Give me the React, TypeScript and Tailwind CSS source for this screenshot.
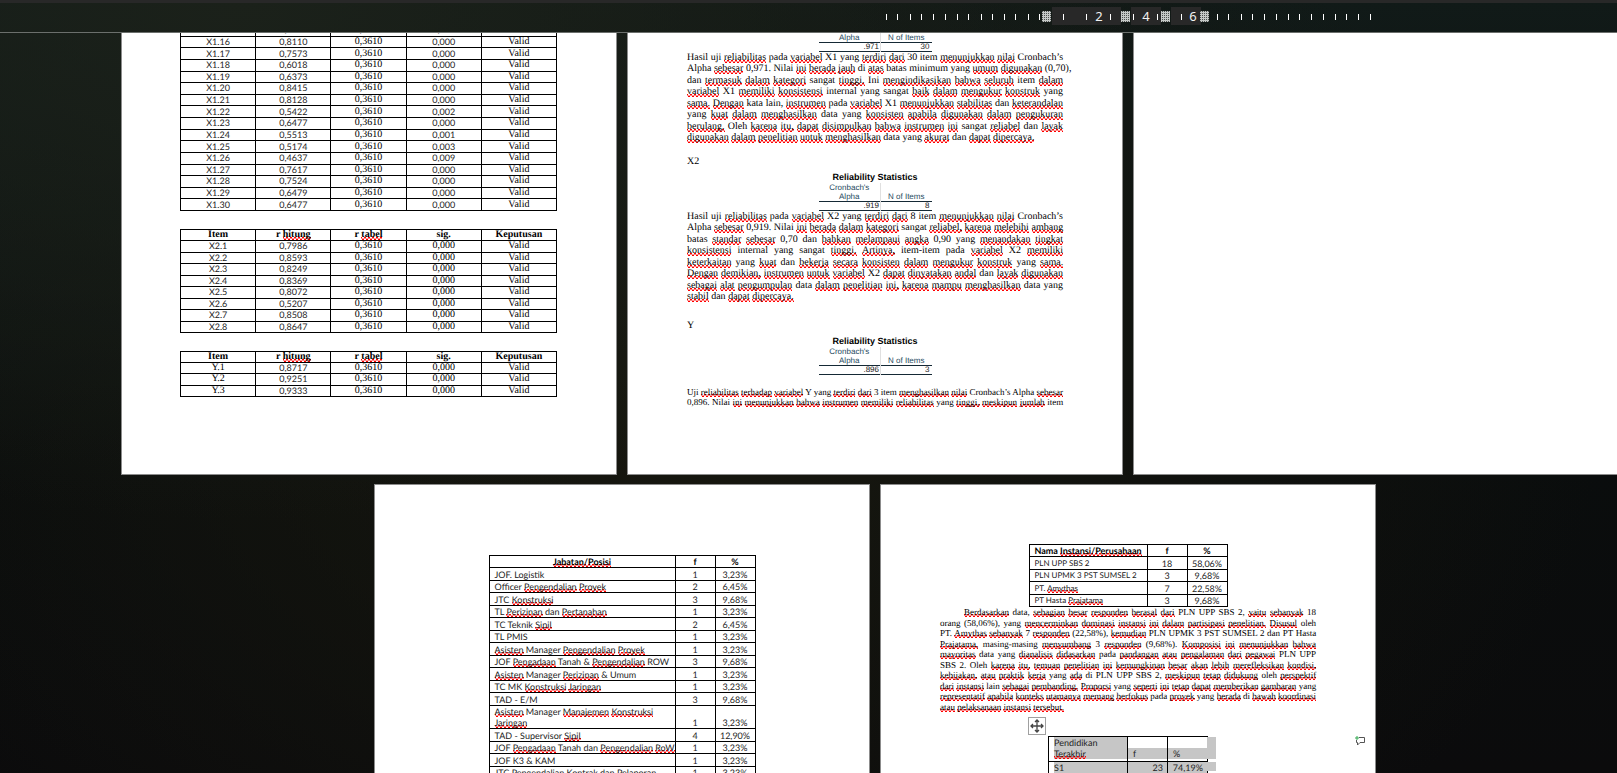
import { ReactNode } from 'react';
import clsx from 'clsx';

const SERIF = "font-['Liberation_Serif',serif]";
const SANS = "font-['Lato',sans-serif]";
const ARIAL = "font-['Liberation_Sans',sans-serif]";

type ValidityRow = [item: string, r: string, sig: string];

const x1Rows: ValidityRow[] = [
  ['X1.15', '0,7034', '0,000'],
  ['X1.16', '0,8110', '0,000'],
  ['X1.17', '0,7573', '0,000'],
  ['X1.18', '0,6018', '0,000'],
  ['X1.19', '0,6373', '0,000'],
  ['X1.20', '0,8415', '0,000'],
  ['X1.21', '0,8128', '0,000'],
  ['X1.22', '0,5422', '0,002'],
  ['X1.23', '0,6477', '0,000'],
  ['X1.24', '0,5513', '0,001'],
  ['X1.25', '0,5174', '0,003'],
  ['X1.26', '0,4637', '0,009'],
  ['X1.27', '0,7617', '0,000'],
  ['X1.28', '0,7524', '0,000'],
  ['X1.29', '0,6479', '0,000'],
  ['X1.30', '0,6477', '0,000'],
];

const x2Rows: ValidityRow[] = [
  ['X2.1', '0,7986', '0,000'],
  ['X2.2', '0,8593', '0,000'],
  ['X2.3', '0,8249', '0,000'],
  ['X2.4', '0,8369', '0,000'],
  ['X2.5', '0,8072', '0,000'],
  ['X2.6', '0,5207', '0,000'],
  ['X2.7', '0,8508', '0,000'],
  ['X2.8', '0,8647', '0,000'],
];

const yRows: ValidityRow[] = [
  ['Y.1', '0,8717', '0,000'],
  ['Y.2', '0,9251', '0,000'],
  ['Y.3', '0,9333', '0,000'],
];

// A leading ~ marks a word flagged by the spell checker
const x1Lines = [
  'Hasil uji ~reliabilitas pada ~variabel X1 yang ~terdiri ~dari 30 item ~menunjukkan ~nilai Cronbach’s',
  'Alpha ~sebesar 0,971. Nilai ~ini ~berada ~jauh di ~atas batas minimum yang ~umum ~digunakan (0,70),',
  'dan ~termasuk ~dalam ~kategori sangat ~tinggi. Ini ~mengindikasikan ~bahwa ~seluruh item ~dalam',
  '~variabel X1 ~memiliki ~konsistensi internal yang sangat ~baik ~dalam ~mengukur ~konstruk yang',
  '~sama. ~Dengan kata lain, ~instrumen pada ~variabel X1 ~menunjukkan ~stabilitas dan ~keterandalan',
  'yang ~kuat ~dalam ~menghasilkan data yang ~konsisten ~apabila ~digunakan ~dalam ~pengukuran',
  '~berulang. Oleh ~karena ~itu, ~dapat ~disimpulkan ~bahwa ~instrumen ~ini sangat ~reliabel dan ~layak',
  '~digunakan ~dalam ~penelitian ~untuk ~menghasilkan data yang ~akurat dan ~dapat ~dipercaya.',
];

const x2Lines = [
  'Hasil uji ~reliabilitas pada ~variabel X2 yang ~terdiri ~dari 8 item ~menunjukkan ~nilai Cronbach’s',
  'Alpha ~sebesar 0,919. Nilai ~ini ~berada ~dalam ~kategori sangat ~reliabel, ~karena ~melebihi ~ambang',
  'batas ~standar ~sebesar 0,70 dan ~bahkan ~melampaui ~angka 0,90 yang ~menandakan ~tingkat',
  '~konsistensi internal yang sangat ~tinggi. ~Artinya, item-item pada ~variabel X2 ~memiliki',
  '~keterkaitan yang ~kuat dan ~bekerja ~secara ~konsisten ~dalam ~mengukur ~konstruk yang ~sama.',
  '~Dengan ~demikian, ~instrumen ~untuk ~variabel X2 ~dapat ~dinyatakan ~andal dan ~layak ~digunakan',
  '~sebagai ~alat ~pengumpulan data ~dalam ~penelitian ~ini, ~karena ~mampu ~menghasilkan data yang',
  '~stabil dan ~dapat ~dipercaya.',
];

const yLines = [
  'Uji ~reliabilitas ~terhadap ~variabel Y yang ~terdiri ~dari 3 item ~menghasilkan ~nilai Cronbach’s Alpha ~sebesar',
  '0,896. Nilai ~ini ~menunjukkan ~bahwa ~instrumen ~memiliki ~reliabilitas yang ~tinggi, ~meskipun ~jumlah item',
];

const instansiLines = [
  '~Berdasarkan data, ~sebagian ~besar ~responden ~berasal ~dari PLN UPP SBS 2, ~yaitu ~sebanyak 18',
  'orang (58,06%), yang ~mencerminkan ~dominasi ~instansi ~ini ~dalam ~partisipasi ~penelitian. ~Disusul oleh',
  'PT. ~Amythas ~sebanyak 7 ~responden (22,58%), ~kemudian PLN UPMK 3 PST SUMSEL 2 dan PT Hasta',
  '~Prajatama, masing-masing ~menyumbang 3 ~responden (9,68%). ~Komposisi ~ini ~menunjukkan ~bahwa',
  '~mayoritas data yang ~dianalisis ~didasarkan pada ~pandangan ~atau ~pengalaman ~dari ~pegawai PLN UPP',
  'SBS 2. Oleh ~karena ~itu, ~temuan ~penelitian ~ini ~kemungkinan ~besar ~akan ~lebih ~merefleksikan ~kondisi,',
  '~kebijakan, ~atau ~praktik ~kerja yang ~ada di PLN UPP SBS 2, ~meskipun ~tetap ~didukung oleh ~perspektif',
  '~dari ~instansi lain ~sebagai ~pembanding. ~Proporsi yang ~seperti ~ini ~tetap ~dapat ~memberikan ~gambaran yang',
  '~representatif ~apabila ~konteks ~utamanya ~memang ~berfokus pada ~proyek yang ~berada di ~bawah ~koordinasi',
  '~atau ~pelaksanaan ~instansi ~tersebut.',
];

type CountRow = [label: string, f: string, pct: string];

const jabatanRows: CountRow[] = [
  ['JOF. Logistik', '1', '3,23%'],
  ['Officer ~Pengendalian ~Proyek', '2', '6,45%'],
  ['JTC ~Konstruksi', '3', '9,68%'],
  ['TL ~Perizinan dan ~Pertanahan', '1', '3,23%'],
  ['TC Teknik ~Sipil', '2', '6,45%'],
  ['TL PMIS', '1', '3,23%'],
  ['~Asisten Manager ~Pengendalian ~Proyek', '1', '3,23%'],
  ['JOF ~Pengadaan Tanah & ~Pengendalian ROW', '3', '9,68%'],
  ['~Asisten Manager ~Perizinan & Umum', '1', '3,23%'],
  ['TC MK ~Konstruksi ~Jaringan', '1', '3,23%'],
  ['TAD - E/M', '3', '9,68%'],
  ['~Asisten Manager ~Manajemen ~Konstruksi ~Jaringan', '1', '3,23%'],
  ['TAD - Supervisor ~Sipil', '4', '12,90%'],
  ['JOF ~Pengadaan Tanah dan ~Pengendalian ~RoW', '1', '3,23%'],
  ['JOF K3 & KAM', '1', '3,23%'],
  ['JTC ~Pengendalian ~Kontrak dan ~Pelaporan', '1', '3,23%'],
];

const instansiRows: CountRow[] = [
  ['PLN UPP SBS 2', '18', '58,06%'],
  ['PLN UPMK 3 PST SUMSEL 2', '3', '9,68%'],
  ['PT. ~Amythas', '7', '22,58%'],
  ['PT Hasta ~Prajatama', '3', '9,68%'],
];

// Zigzag: the upper half of a repeated 4x6 cross, clipped by the bottom of the word
const SQUIGGLE =
  'bg-[linear-gradient(56deg,transparent_42%,#f00_46%,#f00_54%,transparent_58%),linear-gradient(-56deg,transparent_42%,#f00_46%,#f00_54%,transparent_58%)] bg-[length:4px_6px] bg-[position:0_calc(100%_+_3px)] bg-repeat-x';

function Spelled({ text }: { text: string }) {
  return (
    <>
      {text.split(' ').map((word, i) => (
        <span key={i}>
          {i > 0 && ' '}
          {word.startsWith('~') ? <span className={SQUIGGLE}>{word.slice(1)}</span> : word}
        </span>
      ))}
    </>
  );
}

function Paragraph({ lines, className, full }: { lines: string[]; className: string; full?: boolean }) {
  return (
    <p className={clsx('flex shrink-0 flex-col justify-between whitespace-nowrap', className)}>
      {lines.map((line, i) => (
        <span
          key={i}
          className={clsx('block', (full || i < lines.length - 1) && '[text-align-last:justify]')}
        >
          <Spelled text={line} />
        </span>
      ))}
    </p>
  );
}

function Page({ className, children }: { className: string; children?: ReactNode }) {
  return (
    <section
      className={clsx('flex w-[496px] shrink-0 flex-col border-[#8c8c8c] bg-white px-[59px] text-black', className)}
    >
      {children}
    </section>
  );
}

function ValidityTable({ rows, header, className }: { rows: ValidityRow[]; header?: boolean; className: string }) {
  const cell = 'border border-black p-0';
  return (
    <table
      className={clsx(
        '-ml-px w-[377px] shrink-0 table-fixed border-collapse text-center text-[10px] leading-[10px]',
        SERIF,
        className,
      )}
    >
      {header && (
        <thead>
          <tr>
            <th className={cell}>Item</th>
            <th className={cell}><Spelled text="r ~hitung" /></th>
            <th className={cell}><Spelled text="r ~tabel" /></th>
            <th className={cell}>sig.</th>
            <th className={cell}>Keputusan</th>
          </tr>
        </thead>
      )}
      <tbody>
        {rows.map(([item, r, sig]) => (
          <tr key={item}>
            <td className={clsx(cell, !item.startsWith('Y') && `${SANS} text-[9px] text-[#222]`)}>{item}</td>
            <td className={clsx(cell, SANS, 'text-[9px] text-[#222]')}>{r}</td>
            <td className={cell}>0,3610</td>
            <td className={clsx(cell, !header && `${SANS} text-[9px] text-[#222]`)}>{sig}</td>
            <td className={cell}>Valid</td>
          </tr>
        ))}
      </tbody>
    </table>
  );
}

function ReliabilityTable({ alpha, items }: { alpha: string; items: string }) {
  return (
    <table
      className={clsx(
        'mx-auto w-[113px] shrink-0 table-fixed border-collapse text-[8px] leading-[9px] text-[#264a60]',
        ARIAL,
      )}
    >
      <caption className="text-[9px] leading-[11px] font-bold whitespace-nowrap text-black">
        Reliability Statistics
      </caption>
      <thead>
        <tr className="h-[18px] border-b border-[#152935] align-bottom">
          <th className="w-[62px] border-r border-r-[#e0e0e0] p-0 font-normal">Cronbach's Alpha</th>
          <th className="p-0 font-normal">N of Items</th>
        </tr>
      </thead>
      <tbody>
        <tr className="h-[9px] border-b border-[#152935] text-right leading-[8px] text-[#222]">
          <td className="border-r border-r-[#e0e0e0] p-0 pr-px">{alpha}</td>
          <td className="p-0 pr-0.5">{items}</td>
        </tr>
      </tbody>
    </table>
  );
}

function CountTable({ label, rows, className }: { label: string; rows: CountRow[]; className: string }) {
  return (
    <table
      className={clsx(
        'mx-auto shrink-0 table-fixed border-collapse text-[9px] leading-[11px] text-[#222]',
        SANS,
        className,
      )}
    >
      <thead>
        <tr className="h-[12px] text-black">
          <th className="border border-black p-0"><Spelled text={label} /></th>
          <th className="w-[40px] border border-black p-0">f</th>
          <th className="w-[40px] border border-black p-0">%</th>
        </tr>
      </thead>
      <tbody>
        {rows.map(([name, f, pct]) => (
          <tr key={name} className="align-bottom odd:h-[13px] even:h-[12px]">
            <td className="border border-black p-0 pl-[5px]"><Spelled text={name} /></td>
            <td className="border border-black p-0 text-center">{f}</td>
            <td className="border border-black p-0 text-center">{pct}</td>
          </tr>
        ))}
      </tbody>
    </table>
  );
}

function EducationTable() {
  return (
    <table
      className={clsx('mx-auto w-[160px] table-fixed border-collapse text-[9px] leading-[11px] text-[#222]', SANS)}
    >
      <tbody>
        <tr className="h-[25px] align-bottom">
          <td className="border border-black p-0 pb-0.5 pl-[5px]">
            <div className="bg-[#c6c6c6]">
              Pendidikan
              <br />
              <Spelled text="~Terakhir" />
            </div>
          </td>
          <td className="w-[40px] border border-black p-0 pb-0.5">
            <div className="bg-[#c6c6c6] pl-[5px]">f</div>
          </td>
          <td className="w-[40px] border border-black p-0 pb-0.5">
            <div className="bg-[#c6c6c6] pl-[5px]">%</div>
          </td>
        </tr>
        {[['S1', '23', '74,19%'], ['S2', '6', '19,35%']].map(([name, f, pct]) => (
          <tr key={name} className="h-[12px]">
            <td className="border border-black p-0 pl-[5px]">
              <div className="bg-[#c6c6c6]">{name}</div>
            </td>
            <td className="border border-black bg-[#c6c6c6] p-0 pr-1 text-right">{f}</td>
            <td className="border border-black bg-[#c6c6c6] p-0 pr-1 text-right">{pct}</td>
          </tr>
        ))}
      </tbody>
    </table>
  );
}

const leftTicks = [0, 11, 24, 35, 47, 59, 71, 82, 95, 106, 118, 129, 142, 153];
const rightTicks = [331, 342, 355, 366, 378, 390, 402, 413, 425, 437, 449, 460, 472, 484];
const innerTicks = [177, 200, 224, 247, 271, 295];

function Ruler() {
  return (
    <svg width="486" height="29" className="ml-[886px] block" role="img" aria-label="Ruler">
      <defs>
        <pattern id="grip" width="2" height="2" patternUnits="userSpaceOnUse">
          <rect width="2" height="2" fill="#c4c8c6" />
          <rect width="1" height="1" fill="#4c504e" />
        </pattern>
      </defs>
      {[[166, 69], [245, 30], [285, 30]].map(([x, w]) => (
        <rect key={x} x={x} y="4" width={w} height="18" fill="#282828" />
      ))}
      {[...leftTicks, ...innerTicks, ...rightTicks].map(x => (
        <rect key={x} x={x} y="11" width="1" height="6" fill="#fff" />
      ))}
      {[156, 235, 275, 314].map(x => (
        <rect key={x} x={x} y="8" width="9" height="11" fill="url(#grip)" />
      ))}
      {[[213, '2'], [260, '4'], [307, '6']].map(([x, n]) => (
        <text key={n} x={x} y="18" textAnchor="middle" fontSize="13" fill="#f2f2f2" fontFamily="Noto Sans, sans-serif">
          {n}
        </text>
      ))}
    </svg>
  );
}

export default function App() {
  return (
    <div className="flex h-screen flex-col overflow-hidden bg-[#0c0e0d] bg-[radial-gradient(ellipse_900px_520px_at_240px_0px,#1b211a,transparent),radial-gradient(ellipse_900px_600px_at_700px_420px,#17170f,transparent),linear-gradient(#111a18,#0a0d0d_60%,#0b0b0c)]">
      <header className="shrink-0 border-t-[3px] border-b border-t-[#282828] border-b-[#6b6f6c]">
        <Ruler />
      </header>

      <main className="flex min-h-0 w-max flex-1 flex-col items-center gap-[9px] overflow-hidden pl-[121px] [text-rendering:geometricPrecision]">
        <div className="flex h-[442px] shrink-0 gap-[10px] overflow-hidden">
          <Page className="justify-end gap-[18px] border-x border-b pb-[77px]">
            <ValidityTable rows={x1Rows} className="h-[187px]" />
            <ValidityTable rows={x2Rows} header className="h-[104px]" />
            <ValidityTable rows={yRows} header className="h-[46px]" />
          </Page>

          <Page className={clsx('justify-end border-x border-b pb-[67px] text-[10px] leading-[12px]', SERIF)}>
            <ReliabilityTable alpha=".971" items="30" />
            <Paragraph lines={x1Lines} className="h-[91px] leading-[11px]" />
            <p className="mt-[13px] mb-[4px]">X2</p>
            <ReliabilityTable alpha=".919" items="8" />
            <Paragraph lines={x2Lines} className="h-[91px] leading-[11px]" />
            <p className="mt-[18px] mb-[4px]">Y</p>
            <ReliabilityTable alpha=".896" items="3" />
            <Paragraph lines={yLines} full className="mt-[12px] text-[9px] leading-[10px]" />
          </Page>

          <Page className="border-x border-b" />
        </div>

        <div className="flex flex-1 gap-[10px]">
          <Page className="border-x border-t pt-[70px]">
            <CountTable label="~Jabatan/Posisi" rows={jabatanRows} className="w-[267px]" />
          </Page>

          <Page className="relative border-x border-t pt-[59px]">
            <CountTable
              label="Nama ~Instansi/Perusahaan"
              rows={instansiRows}
              className="w-[199px] whitespace-nowrap [&_td:first-child]:text-[8px]"
            />
            <Paragraph
              lines={instansiLines}
              className={clsx('h-[105px] text-[9px] leading-[10px] [&>span:first-child]:pl-6', SERIF)}
            />
            <div className="relative mt-[24px]">
              <button
                aria-label="Move table"
                className="absolute -top-[19px] left-[88px] flex size-[18px] items-center justify-center border border-[#a0a0a0] bg-white"
              >
                <svg width="14" height="14" viewBox="0 0 14 14" fill="none" stroke="#444" strokeWidth="1.3">
                  <path d="M7 1v12M1 7h12M5 3l2-2 2 2M5 11l2 2 2-2M3 5L1 7l2 2M11 5l2 2-2 2" />
                </svg>
              </button>
              <EducationTable />
              {/* selection overhang past the last column */}
              <div className="absolute top-px right-[100px] flex w-[9px] flex-col gap-[3px]">
                <span className="h-[22px] bg-[#c6c6c6]" />
                <span className="h-[9px] bg-[#c6c6c6]" />
                <span className="h-[9px] bg-[#c6c6c6]" />
              </div>
            </div>
            <button aria-label="Add comment" className="absolute top-[251px] right-[9px]">
              <svg width="11" height="10" viewBox="0 0 11 10" fill="none">
                <path d="M4 1.500H9.500V6.500H5L2.500 9V6.500H1.500V4" stroke="#555" />
                <path d="M2 0v4M0 2h4" stroke="#35a853" />
              </svg>
            </button>
          </Page>
        </div>
      </main>
    </div>
  );
}
